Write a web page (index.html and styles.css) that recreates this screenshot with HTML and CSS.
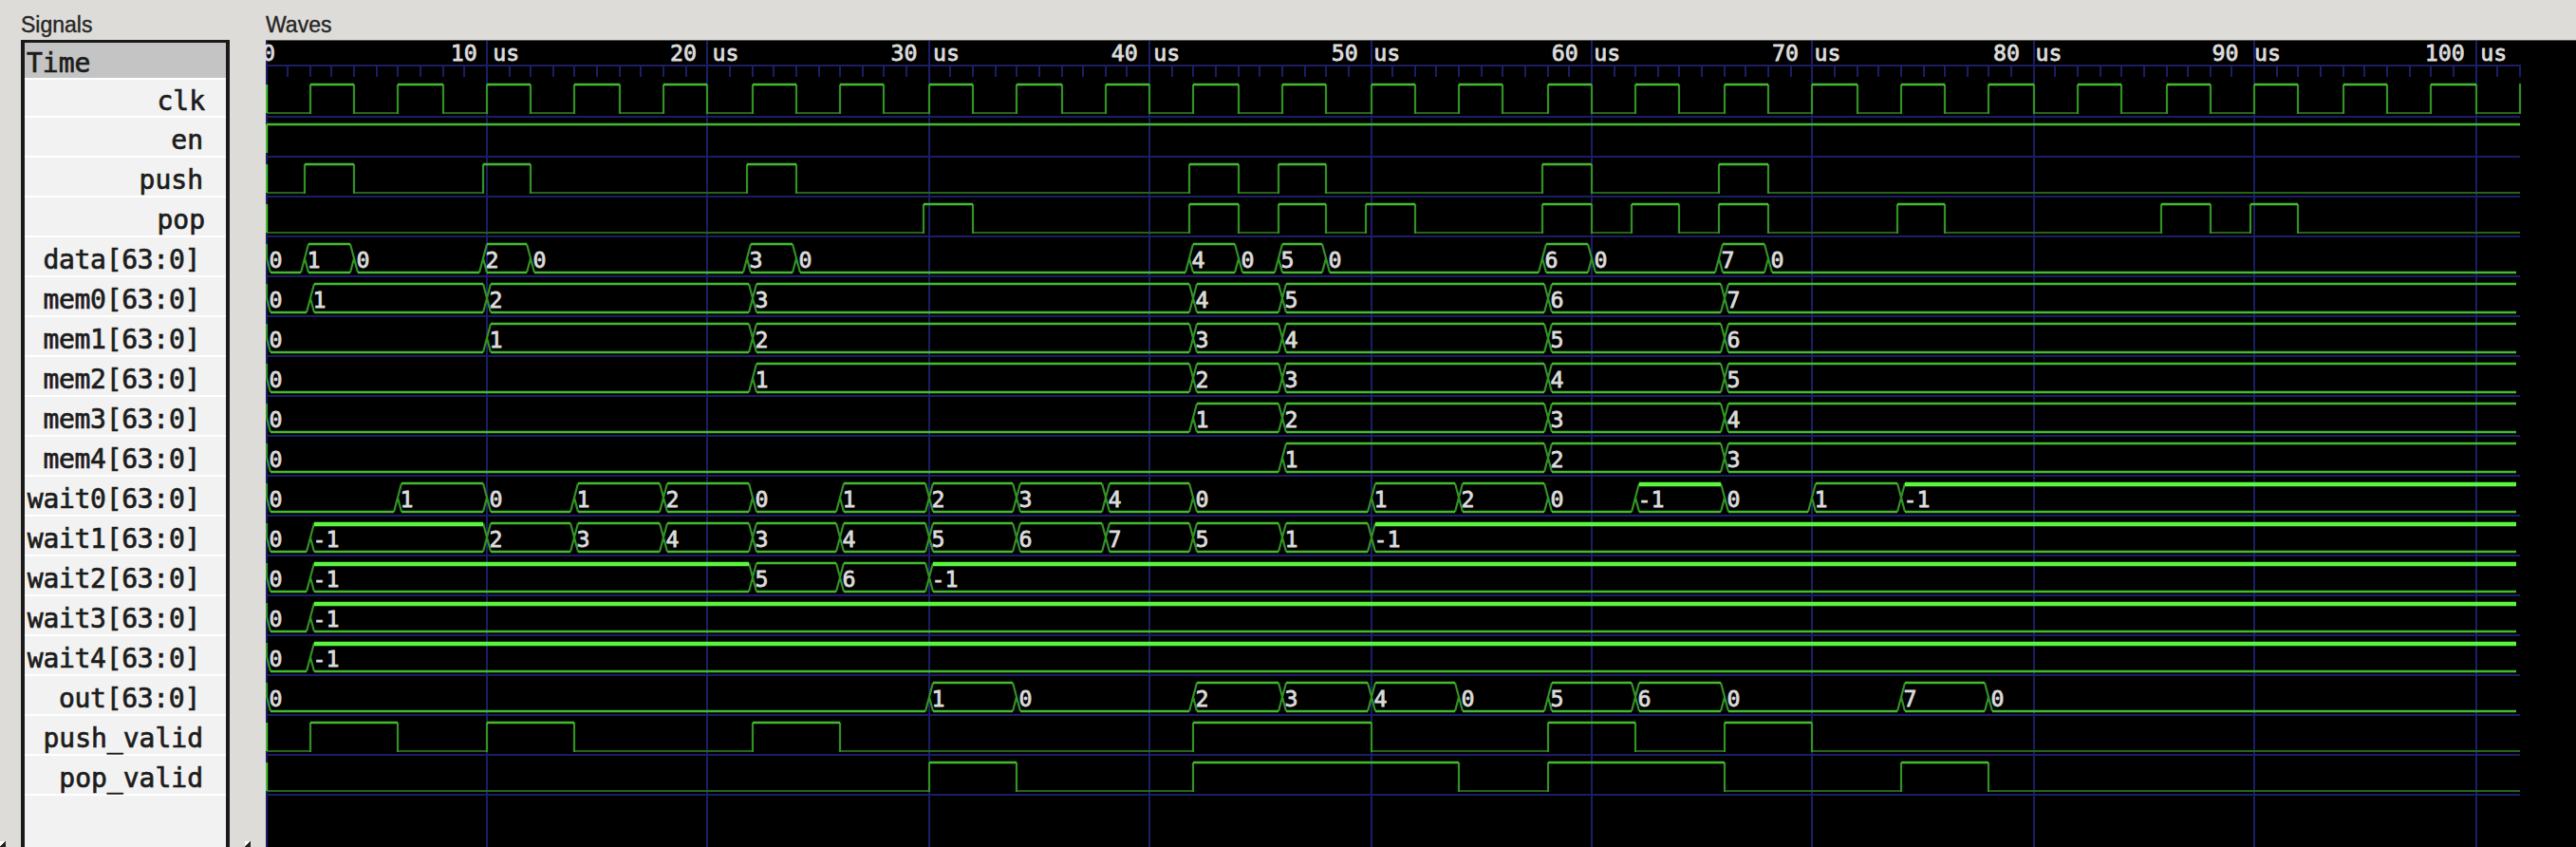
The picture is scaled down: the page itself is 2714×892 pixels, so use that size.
FILE: index.html
```html
<!DOCTYPE html>
<html lang="en">
<head>
<meta charset="utf-8">
<title>Waves</title>
<link rel="stylesheet" href="styles.css">
</head>
<body>
<main class="viewer">
  <section class="signals">
    <h2 class="title">Signals</h2>
    <div class="list" id="list"><div class="time">Time</div></div>
    <i class="grip"></i>
  </section>
  <section class="waves">
    <h2 class="title">Waves</h2>
    <svg class="plot" id="plot" width="2434" height="850" viewBox="280 42 2434 850"></svg>
    <i class="grip"></i>
  </section>
</main>
<script src="waves.js"></script>
</body>
</html>
```
FILE: styles.css
```css
* { box-sizing: border-box; }
body { margin: 0; background: #dedcd8; overflow: hidden; }
.viewer { display: flex; height: 892px; padding-left: 22px; gap: 38px; }
.signals, .waves { display: flex; flex-direction: column; position: relative; }
.signals { width: 220px; flex: none; }
.waves { width: 2434px; flex: none; }
.title { margin: 0; height: 42px; padding-top: 12px; font: 400 23px/28px "Liberation Sans", Arial, sans-serif; color: #262626; -webkit-text-stroke: 0.4px #262626; }
.list { flex: 1; border: solid #1a1a1a; border-width: 3px 4px 0; background: #f2f2f2; color: #1c1c1c; font: 28px/42px "DejaVu Sans Mono", monospace; white-space: pre; -webkit-text-stroke: 0.7px #1c1c1c; }
.time { height: 39px; background: #c4c4c4; border-bottom: 2px solid #fff; padding-left: 2px; line-height: 43px; }
.signal { height: 42px; border-bottom: 2px solid #fff; padding-right: 24px; text-align: right; line-height: 47px; }
.signal.vector { padding-right: 27px; letter-spacing: -0.3px; }
.signal.short { padding-right: 22px; }
.signal:nth-child(2) { height: 40px; line-height: 46px; }
.grip { position: absolute; bottom: 0; left: -22px; width: 6px; height: 6px; background: linear-gradient(135deg, #fff 45%, #222 46%); }
.waves .grip { left: -22px; }
.plot { display: block; background: #000; }
.plot path { fill: none; stroke-width: 2; }
.plot .grid { stroke: #1b1d66; }
.plot .hi { stroke: #46ba30; stroke-width: 2.4; }
.plot .lo { stroke: #25651a; stroke-width: 2.2; }
.plot .edge { stroke: #329224; stroke-width: 2.2; }
.plot .ones { stroke: #5cf53d; stroke-width: 4.4; }
.plot .rim { stroke: #55554f; }
.plot text { font: 23.25px "DejaVu Sans Mono", monospace; fill: #dcdcdc; stroke: #dcdcdc; stroke-width: 0.8px; white-space: pre; }
.plot .stamp { word-spacing: 2.5px; }
```
FILE: waves.js
```javascript
const END = 102;
const X = t => 281 + 2 * Math.floor(t * 11.64 + 1e-6);
const pulse = (...p) => ({ pulse: p });
const bus = (...v) => ({ bus: v });
const clk = [];
for (let t = 2; t < END; t += 4) clk.push([t, t + 2]);

// Pulses are [rise, fall]; bus entries are [time, value].
const signals = [
  ['clk', pulse(...clk)],
  ['en', pulse([0, END])],
  ['push', pulse([1.8, 4], [9.8, 12], [21.8, 24], [41.8, 44], [45.8, 48], [57.8, 60], [65.8, 68])],
  ['pop', pulse([29.8, 32], [41.8, 44], [45.8, 48], [49.8, 52], [57.8, 60], [61.8, 64], [65.8, 68], [73.8, 76], [85.8, 88], [89.8, 92])],
  ['data[63:0]', bus([0, 0], [1.8, 1], [4, 0], [9.8, 2], [12, 0], [21.8, 3], [24, 0], [41.8, 4], [44, 0], [45.8, 5], [48, 0], [57.8, 6], [60, 0], [65.8, 7], [68, 0])],
  ['mem0[63:0]', bus([0, 0], [2, 1], [10, 2], [22, 3], [42, 4], [46, 5], [58, 6], [66, 7])],
  ['mem1[63:0]', bus([0, 0], [10, 1], [22, 2], [42, 3], [46, 4], [58, 5], [66, 6])],
  ['mem2[63:0]', bus([0, 0], [22, 1], [42, 2], [46, 3], [58, 4], [66, 5])],
  ['mem3[63:0]', bus([0, 0], [42, 1], [46, 2], [58, 3], [66, 4])],
  ['mem4[63:0]', bus([0, 0], [46, 1], [58, 2], [66, 3])],
  ['wait0[63:0]', bus([0, 0], [6, 1], [10, 0], [14, 1], [18, 2], [22, 0], [26, 1], [30, 2], [34, 3], [38, 4], [42, 0], [50, 1], [54, 2], [58, 0], [62, -1], [66, 0], [70, 1], [74, -1])],
  ['wait1[63:0]', bus([0, 0], [2, -1], [10, 2], [14, 3], [18, 4], [22, 3], [26, 4], [30, 5], [34, 6], [38, 7], [42, 5], [46, 1], [50, -1])],
  ['wait2[63:0]', bus([0, 0], [2, -1], [22, 5], [26, 6], [30, -1])],
  ['wait3[63:0]', bus([0, 0], [2, -1])],
  ['wait4[63:0]', bus([0, 0], [2, -1])],
  ['out[63:0]', bus([0, 0], [30, 1], [34, 0], [42, 2], [46, 3], [50, 4], [54, 0], [58, 5], [62, 6], [66, 0], [74, 7], [78, 0])],
  ['push_valid', pulse([2, 6], [10, 14], [22, 26], [42, 50], [58, 62], [66, 70])],
  ['pop_valid', pulse([30, 34], [42, 54], [58, 66], [74, 78])]
];

const d = { grid: '', lo: '', edge: '', hi: '', ones: '' };
let text = '';
const right = X(END);
const label = (x, y, s, cls = 'value') => { text += `<text class="${cls}" x="${x}" y="${y}">${s}</text>`; };

d.grid += `M281 69H${right + 1}`;
for (let t = 0; t <= END; t++) d.grid += t % 10 ? `M${X(t)} 69V81` : `M${X(t)} 42V892`;
label(276, 64, '0', 'stamp');
// Gap between each major line and the unit to its right.
const unitGap = [6.2, 5.5, 4, 4.2, 2.3, 2.3, 2.5, 1.5, 0, 4.2];
for (let t = 10; t <= 100; t += 10) {
  const lead = (String(t).length + 1) * 14 + 2.5;
  label(X(t) + unitGap[t / 10 - 1] - lead, 64, t + ' us', 'stamp');
}

signals.forEach(([name, wave], i) => {
  const row = document.createElement('div');
  row.className = 'signal' + (wave.bus ? ' vector' : name === 'clk' || name === 'pop' ? ' short' : '');
  row.textContent = name;
  document.getElementById('list').append(row);

  const top = 89 + 42 * i, bot = top + 30, mid = top + 15;
  d.grid += `M281 ${bot + 4}H${right}`;
  if (wave.pulse) {
    let x = 281;
    d.hi += `M281 ${top}V${bot}`;
    for (const [a, b] of wave.pulse) {
      if (X(a) > x) d.lo += `M${x} ${bot}H${X(a)}`;
      if (a > 0) d.edge += `M${X(a)} ${bot + 1}V${top}`;
      d.hi += `M${X(a)} ${top}H${X(b)}`;
      if (b < END) d.edge += `M${X(b)} ${top}V${bot + 1}`;
      x = X(b);
    }
    if (x < right) d.lo += `M${x} ${bot}H${right}`;
    if (name === 'clk') d.edge += `M${right} ${top - 1}V${bot + 1}`;
  } else {
    wave.bus.forEach(([t, v], n) => {
      const last = n === wave.bus.length - 1;
      const x = X(t), e = last ? right : X(wave.bus[n + 1][0]);
      d.hi += `M${x + 4} ${bot}H${e - 4}`;
      d.edge += t ? `M${x} ${mid}L${x + 4} ${bot}` : `M281 ${top}V${mid}L285 ${bot}`;
      if (!last) d.edge += `M${e - 4} ${bot}L${e} ${mid}`;
      if (v) {
        if (v < 0) d.ones += `M${x + 4} ${top + 1}H${e - 4}`;
        else d.hi += `M${x + 4} ${top}H${e - 4}`;
        d.edge += `M${x} ${mid}L${x + 4} ${top}`;
        if (!last) d.edge += `M${e - 4} ${top}L${e} ${mid}`;
      }
      label(x + 2.5, top + 24.5, v);
    });
  }
});

document.getElementById('plot').innerHTML =
  Object.entries(d).map(([k, p]) => `<path class="${k}" d="${p}"/>`).join('') +
  '<path class="rim" d="M280 42H2714"/>' + text;
```
